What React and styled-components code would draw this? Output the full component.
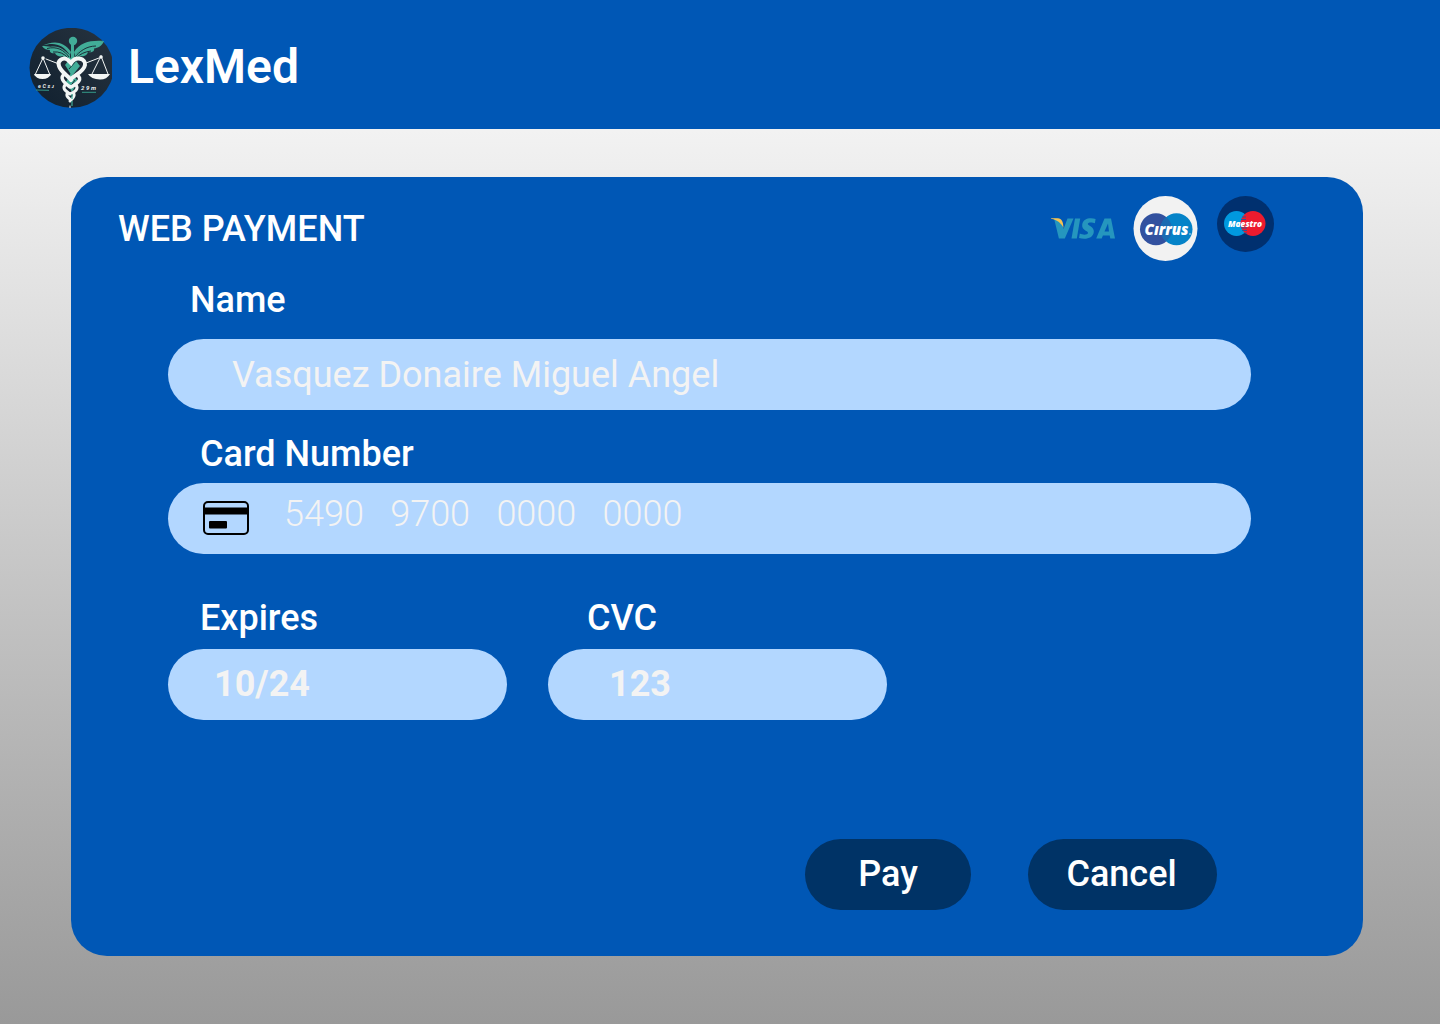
import React from "react";
import styled, { createGlobalStyle } from "styled-components";

const GlobalStyle = createGlobalStyle`
  * { box-sizing: border-box; }
  body { margin: 0; font-family: Roboto, sans-serif; }
`;

const Page = styled.div`
  display: flex;
  flex-direction: column;
  width: 1440px;
  height: 1024px;
  overflow: hidden;
  background: linear-gradient(180deg, #ffffff 0%, #999999 100%);
`;

const Header = styled.header`
  display: flex;
  align-items: flex-start;
  gap: 16px;
  flex: none;
  height: 129px;
  padding: 28px 29px 0;
  background: #0057b5;
`;

const Brand = styled.h1`
  margin: 11px 0 0;
  font-size: 48px;
  line-height: 56px;
  font-weight: 600;
  color: #fff;
`;

const Card = styled.main`
  display: flex;
  flex-direction: column;
  width: 1292px;
  height: 779px;
  margin: 48px 0 0 71px;
  padding: 19px 0 46px;
  border-radius: 36px;
  background: #0057b5;
`;

const CardTop = styled.div`
  display: flex;
  justify-content: space-between;
  height: 83px;
  padding: 0 89px 0 47px;
`;

const Title = styled.h2`
  margin: 12px 0 0;
  font-size: 36px;
  line-height: 42px;
  font-weight: 500;
  color: #fff;
`;

const Brands = styled.div`
  display: flex;
  align-items: flex-start;
`;

const Form = styled.form`
  display: flex;
  flex-direction: column;
  flex: 1;
  padding: 0 112px 0 97px;
`;

const Field = styled.div`
  display: flex;
  flex-direction: column;
  width: ${(p) => p.$width || "auto"};
  margin-top: ${(p) => p.$top || 0}px;
`;

const Label = styled.label`
  margin: 0 0 ${(p) => p.$gap}px ${(p) => p.$indent}px;
  font-size: 36px;
  line-height: 42px;
  font-weight: 500;
  color: #fff;
`;

const Box = styled.div`
  display: flex;
  align-items: flex-start;
  height: 71px;
  padding: ${(p) => p.$top}px 0 0 ${(p) => p.$left}px;
  border-radius: 36px;
  background: #b3d7ff;
`;

const Value = styled.span`
  font-size: 36px;
  line-height: 42px;
  font-weight: ${(p) => p.$weight || 400};
  color: #f3f3f3;
  white-space: pre;
`;

const CardIcon = styled.svg`
  flex: none;
  margin: 8px 35px 0 0;
`;

const Row = styled.div`
  display: flex;
  gap: 41px;
  margin-top: 43px;
`;

const Actions = styled.div`
  display: flex;
  justify-content: flex-end;
  gap: 57px;
  margin-top: auto;
  padding-right: 34px;
`;

const Button = styled.button`
  width: ${(p) => p.$width}px;
  height: 71px;
  padding: 0 ${(p) => p.$shift || 0}px 1px 0;
  border: 0;
  border-radius: 36px;
  background: #003366;
  font: 500 36px/42px Roboto, sans-serif;
  color: #fff;
`;

const Logo = () => (
  <svg width="83" height="80" viewBox="0 0 83 80">
    <defs>
      <linearGradient id="night" x1="0" y1="1" x2="1" y2="0">
        <stop offset="0" stopColor="#10202f" />
        <stop offset="1" stopColor="#27333f" />
      </linearGradient>
      <clipPath id="badge"><rect width="83" height="80" /></clipPath>
    </defs>
    <g clipPath="url(#badge)">
      <ellipse cx="42.5" cy="39.8" rx="42" ry="40" fill="url(#night)" />
      <g fill="#42ad98">
        <path d="M41 27C35 22 31 18 24 18.500C20 19 17 18 13 18C15 21 18 22 21 22C20 24 23 26 26 25C27 28 31 29 34 28C35 30 38 32 41 31Z" />
        <path d="M46 27C52 20 57 16 63 15C67 14 71 14 75 13C73 18 69 20 65 20.500C66 23 63 25 59 24C58 28 54 29 51 28C50 31 47 33 44 32Z" />
        <path d="M41 27C33 16 25 14 13 18C23 13 34 12 42 24Z" />
        <path d="M45 24C51 14 62 12 75 13C61 17 52 18 46 28Z" />
        <circle cx="44" cy="13" r="4.200" />
        <path d="M42 15H45V36H42Z" />
        <path d="M36 37L43 28L51 38L43 48Z" />
        <path d="M37 54L42 45L49 53L43 64Z" />
      </g>
      <g fill="none" stroke="#1b2d38" strokeWidth="1">
        <path d="M18 20.500C28 18 35 22 40 29M24 24Q33 23 39 30M67 18C57 18 50 24 46 29M62 23Q53 24 47 30" />
        <path d="M40 36L46 30M40 41L47 33M40 53L46 46M41 59L46 52" />
      </g>
      <g fill="none" stroke="#f3f6f5" strokeLinecap="round">
        <path strokeWidth="4" d="M39 32C34 28 28 33 30 38C32 44 38 47 42 52M39 32L42 35C47 27 57 31 56 37C55 43 48 46 43 50" />
        <path strokeWidth="3.500" d="M36 46C30 49 34 54 41 59M48 47C54 51 49 55 42 59" />
        <path strokeWidth="3" d="M36 57C33 61 37 63 41 66M47 57C50 61 46 64 41 66M38 66C37 69 40 70 42 72M45 66C46 69 43 71 41 73" />
        <path strokeWidth="1" d="M14 30L6 47M14 30L21 47M72 28L63 46M72 28L79 46M41 78V80" />
        <path strokeWidth="1" d="M17 31L30 36M57 35L70 30" />
      </g>
      <g fill="#f3f6f5">
        <circle cx="14" cy="30" r="1.800" />
        <circle cx="72" cy="29" r="1.800" />
        <path d="M5 46H22Q20 51 13.500 51Q7 51 5 46ZM59 46H81Q78 51.500 71 51.500Q62 51 59 46Z" />
      </g>
      <path d="M43 66V80" stroke="#42ad98" strokeWidth="1.200" strokeDasharray="5 2" />
      <path d="M7 62L20 62.300M53 64.300H67" stroke="#349989" strokeWidth="1" />
      <g fill="#eef2f2" fontFamily="Roboto, sans-serif" fontStyle="italic" fontWeight="700">
        <text x="9" y="60" fontSize="5.500" textLength="16">eCsɹ</text>
        <text x="52" y="62" fontSize="6" textLength="15">29m</text>
      </g>
    </g>
  </svg>
);

const Visa = () => (
  <svg width="66" height="66" viewBox="0 0 66 66">
    <g fill="#2596be">
      <path d="M4 22.300C9 22.300 12 25 13.500 33L17.500 22.500H23.500L14.800 42.500H8.900Z" />
      <path d="M25 22.500H30.200L26.800 42.500H21.500Z" />
      <path d="M45.600 23.100L44.900 27.300C43 26.400 38.500 25.700 37.800 27.700C37.400 29.700 44.500 30.500 43.800 36.100C43 42.700 35.300 43.900 29 42L29.800 37.500C32.500 39 37.500 39.200 38 37C38.400 34.600 31.600 34.500 32.200 28.700C33 22.200 40.500 21.400 45.600 23.100Z" />
      <path fillRule="evenodd" d="M54.500 22.500H61L65 42.500H60.300L59.700 39.400H52.900L51.700 42.500H46.200ZM58 27.500L54.500 35.400H59Z" />
    </g>
    <path d="M1 22.200H8C11.600 22.500 13.200 25 13.500 32C11.500 27.500 7.500 24 1 22.800Z" fill="#f8c250" />
  </svg>
);

const Cirrus = styled.svg`
  margin-left: 17px;
`;

const Maestro = styled.svg`
  margin-left: 19px;
`;

export default function App() {
  return (
    <>
      <GlobalStyle />
      <Page>
        <Header>
          <Logo />
          <Brand>LexMed</Brand>
        </Header>
        <Card>
          <CardTop>
            <Title>WEB PAYMENT</Title>
            <Brands>
              <Visa />
              <Cirrus width="65" height="65" viewBox="0 0 65 65">
                <defs>
                  <clipPath id="cirrusLeft"><circle cx="23" cy="33.300" r="16" /></clipPath>
                </defs>
                <ellipse cx="32.500" cy="32.500" rx="32" ry="32.500" fill="#f2f2f2" />
                <circle cx="23" cy="33.300" r="16" fill="#32519f" />
                <circle cx="43.500" cy="33.300" r="16" fill="#0583c8" />
                <circle cx="43.500" cy="33.300" r="16" fill="#1b6bb2" clipPath="url(#cirrusLeft)" />
                <text x="11.500" y="39" textLength="44" lengthAdjust="spacingAndGlyphs" fill="#fff" fontFamily="Open Sans, sans-serif" fontStyle="italic" fontWeight="800" fontSize="16.500">Cırrus</text>
                <circle cx="57" cy="38" r="0.700" fill="#fff" />
              </Cirrus>
              <Maestro width="57" height="56" viewBox="0 0 57 56">
                <ellipse cx="28.500" cy="28" rx="28.500" ry="28" fill="#00306f" />
                <circle cx="19.500" cy="27.500" r="12.500" fill="#0099df" />
                <circle cx="36" cy="27.500" r="12.500" fill="#ed1b2e" />
                <path d="M25 21H29M24 23.500H29M24 32H30M25 34.500H30M27 37H30" stroke="#0b5fa5" strokeWidth="0.800" />
                <text x="11" y="31" textLength="34" lengthAdjust="spacingAndGlyphs" fill="#fff" fontFamily="Open Sans, sans-serif" fontStyle="italic" fontWeight="800" fontSize="9.500">Maestro</text>
              </Maestro>
            </Brands>
          </CardTop>
          <Form onSubmit={(e) => e.preventDefault()}>
            <Field>
              <Label $indent={22} $gap={18}>Name</Label>
              <Box $left={64} $top={15}>
                <Value>Vasquez Donaire Miguel Angel</Value>
              </Box>
            </Field>
            <Field $top={23}>
              <Label $indent={32} $gap={8}>Card Number</Label>
              <Box $left={35} $top={10}>
                <CardIcon width="46" height="34" viewBox="0 0 46 34">
                  <rect x="1" y="1" width="44" height="32" rx="4" fill="none" stroke="#000" strokeWidth="2" />
                  <path d="M0 6.500H46V13.500H0ZM6 21Q6 20 7 20H23Q24 20 24 21V26.500Q24 27.500 23 27.500H7Q6 27.500 6 26.500Z" />
                </CardIcon>
                <Value $weight={300}>{"5490   9700   0000   0000"}</Value>
              </Box>
            </Field>
            <Row>
              <Field $width="339px">
                <Label $indent={32} $gap={10}>Expires</Label>
                <Box $left={46} $top={14}>
                  <Value $weight={700}>10/24</Value>
                </Box>
              </Field>
              <Field $width="339px">
                <Label $indent={39} $gap={10}>CVC</Label>
                <Box $left={61} $top={14}>
                  <Value $weight={700}>123</Value>
                </Box>
              </Field>
            </Row>
            <Actions>
              <Button type="submit" $width={166}>Pay</Button>
              <Button type="button" $width={189} $shift={2}>Cancel</Button>
            </Actions>
          </Form>
        </Card>
      </Page>
    </>
  );
}
